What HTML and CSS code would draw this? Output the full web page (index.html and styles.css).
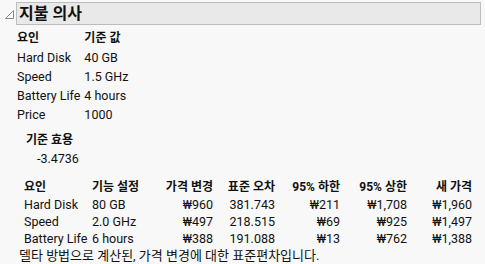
FILE: index.html
```html
<!DOCTYPE html>
<html lang="ko">
<head>
<meta charset="utf-8">
<link rel="stylesheet" href="styles.css">
</head>
<body>
<div class="panel">
  <div class="head">
    <svg class="tri" width="9" height="9" viewBox="0 0 9 9"><path d="M8.5 0.5 L8.5 8.5 L0.5 8.5 Z" fill="none" stroke="#8a8a8a" stroke-width="1"/></svg>
    <div class="titlebox">지불 의사</div>
  </div>
  <div class="body">
    <table class="base">
      <tr><th>요인</th><th>기준 값</th></tr>
      <tr><td>Hard Disk</td><td>40 GB</td></tr>
      <tr><td>Speed</td><td>1.5 GHz</td></tr>
      <tr><td>Battery Life</td><td>4 hours</td></tr>
      <tr><td>Price</td><td>1000</td></tr>
    </table>
    <div class="util">
      <div class="ulabel">기준 효용</div>
      <div class="uval">-3.4736</div>
    </div>
    <table class="res">
      <colgroup>
        <col class="c1"><col class="c2"><col class="c3"><col class="c4"><col class="c5"><col class="c6"><col class="c7">
      </colgroup>
      <tr><th class="l">요인</th><th class="l">기능 설정</th><th>가격 변경</th><th>표준 오차</th><th>95% 하한</th><th>95% 상한</th><th>새 가격</th></tr>
      <tr><td class="l">Hard Disk</td><td class="l">80 GB</td><td>₩960</td><td>381.743</td><td>₩211</td><td>₩1,708</td><td>₩1,960</td></tr>
      <tr><td class="l">Speed</td><td class="l">2.0 GHz</td><td>₩497</td><td>218.515</td><td>₩69</td><td>₩925</td><td>₩1,497</td></tr>
      <tr><td class="l">Battery Life</td><td class="l">6 hours</td><td>₩388</td><td>191.088</td><td>₩13</td><td>₩762</td><td>₩1,388</td></tr>
    </table>
    <div class="note">델타 방법으로 계산된, 가격 변경에 대한 표준편차입니다.</div>
  </div>
</div>
</body>
</html>
```
FILE: styles.css
```css
html, body {
  margin: 0;
  padding: 0;
  background: #f8f8f8;
}
body {
  font-family: Roboto, "Noto Sans CJK KR", sans-serif;
  font-size: 12.5px;
  color: #111;
}
.panel {
  padding: 2px 4px 0 4px;
}
.head {
  display: flex;
  align-items: flex-end;
}
.tri {
  margin: 0 2px 6px 1px;
}
.titlebox {
  flex: 1;
  height: 21px;
  line-height: 21px;
  background: #e9e9e9;
  border: 1px solid #bdbdbd;
  font-size: 16px;
  font-weight: bold;
  padding-left: 2px;
  color: #111;
}
.body {
  padding-left: 13px;
}
table {
  border-collapse: collapse;
}
.base {
  margin-top: 4px;
}
.base th, .base td {
  text-align: left;
  padding: 0 4px 0 0;
  height: 19px;
  line-height: 19px;
  white-space: nowrap;
}
.base th { font-weight: bold; font-size: 12px; }
.util {
  margin-top: 7px;
  padding-left: 9px;
}
.ulabel {
  font-weight: bold;
  font-size: 12px;
  line-height: 19px;
}
.uval {
  padding-left: 11px;
  line-height: 18px;
}
.res {
  margin-top: 11px;
  margin-left: 7px;
  table-layout: fixed;
  width: 448px;
}
.c1 { width: 68px; }
.c2 { width: 64px; }
.c3 { width: 57px; }
.c4 { width: 62px; }
.c5 { width: 65px; }
.c6 { width: 67px; }
.c7 { width: 65px; }
.res th, .res td {
  text-align: right;
  padding: 0;
  height: 17px;
  line-height: 17px;
  white-space: nowrap;
}
.res th { font-weight: bold; font-size: 12px; }
.res .l { text-align: left; }
.note {
  line-height: 17px;
  margin-left: 2px;
  font-size: 13px;
}
```
